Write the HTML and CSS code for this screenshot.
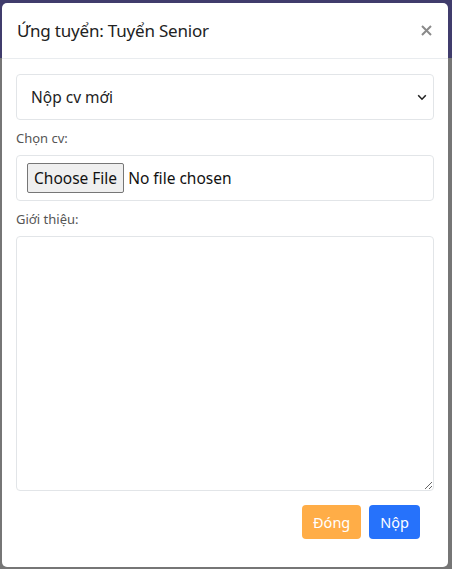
FILE: index.html
```html
<!DOCTYPE html>
<html lang="vi">
<head>
<meta charset="utf-8">
<title>Ứng tuyển</title>
<link rel="stylesheet" href="styles.css">
</head>
<body>
<div class="backdrop">
  <div class="modal">
    <div class="modal-header">
      <h5 class="modal-title">Ứng tuyển: Tuyển Senior</h5>
      <button class="close" type="button" aria-label="Close">
        <svg width="11" height="11" viewBox="0 0 11 11"><path d="M1 1L10 10M10 1L1 10" stroke="#8a8a8a" stroke-width="2"/></svg>
      </button>
    </div>
    <form class="modal-body">
      <div class="control select" role="listbox">
        <span class="select-value">Nộp cv mới</span>
        <svg class="chevron" width="10" height="7" viewBox="0 0 10 7"><path d="M1.2 1.3L5 5.2L8.8 1.3" fill="none" stroke="#222" stroke-width="1.6"/></svg>
      </div>
      <label class="label">Chọn cv:</label>
      <div class="control file-box">
        <span class="file-btn">Choose File</span>
        <span class="file-text">No file chosen</span>
      </div>
      <label class="label">Giới thiệu:</label>
      <textarea class="control textarea"></textarea>
      <div class="actions">
        <button type="button" class="btn btn-warning">Đóng</button>
        <button type="button" class="btn btn-primary">Nộp</button>
      </div>
    </form>
  </div>
</div>
</body>
</html>
```
FILE: styles.css
```css
* { box-sizing: border-box; }
html, body { margin: 0; height: 100%; }
body {
  background: linear-gradient(to bottom, #403c6c 0, #403c6c 58px, #767676 58px, #767676 100%);
  font-family: "Noto Sans", "Open Sans", sans-serif;
  color: #212529;
}
.backdrop {
  height: 569px;
  padding: 3px 4px 2px 2px;
  display: flex;
}
.modal {
  flex: 1;
  background: #fff;
  border-radius: 5px;
  display: flex;
  flex-direction: column;
  overflow: hidden;
}
.modal-header {
  height: 56px;
  border-bottom: 1px solid #e9ecef;
  display: flex;
  align-items: center;
  justify-content: space-between;
  padding: 0 16px 0 15px;
}
.modal-title {
  margin: 0;
  font-size: 17px;
  letter-spacing: -0.2px;
  font-weight: 400;
  color: #222;
  line-height: 27px;
}
.close {
  background: none;
  border: 0;
  padding: 0;
  display: flex;
  cursor: pointer;
}
.modal-body {
  padding: 15px 14px 0 14px;
  display: flex;
  flex-direction: column;
}
.control {
  width: 100%;
  border: 1px solid #e2e5e8;
  border-radius: 4px;
  background: #fff;
}
.select {
  height: 46px;
  display: flex;
  align-items: center;
  justify-content: space-between;
  padding: 0 6px 0 14px;
  font-size: 15.5px;
  color: #222;
}
.chevron { margin-top: 1px; }
.label {
  font-size: 13px;
  color: #555;
  line-height: 20px;
  margin: 8px 0 7px;
}
.file-box {
  height: 46px;
  display: flex;
  align-items: center;
  padding: 0 10px;
  font-size: 15.5px;
  color: #111;
}
.file-btn {
  background: #efefef;
  border: 1px solid #767676;
  border-radius: 2px;
  height: 30px;
  padding: 0 6px;
  display: flex;
  align-items: center;
  margin-right: 4px;
}
.textarea {
  height: 255px;
  resize: vertical;
  font-family: inherit;
}
.actions {
  display: flex;
  justify-content: flex-end;
  gap: 8px;
  margin-top: 14px;
  padding-right: 14px;
}
.btn {
  height: 34px;
  border: 0;
  border-radius: 4px;
  color: #fff;
  font-family: inherit;
  font-size: 14.5px;
  padding: 0 11px;
}
.btn-warning { background: #ffad47; }
.btn-primary { background: #2672fb; }
```
